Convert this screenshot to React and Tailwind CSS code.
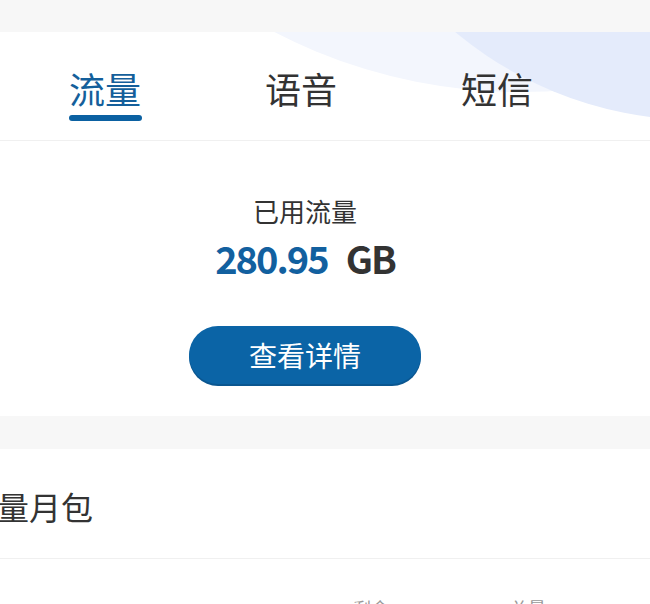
const tabs = ["流量", "语音", "短信"];

function Tabs({ active = 0 }) {
  return (
    <div className="relative h-[109px] overflow-hidden border-b border-[#f0f0f0] bg-white">
      <div className="absolute left-[-13px] top-[-1006px] h-[1066px] w-[1066px] rounded-full bg-[#f3f6fd]" />
      <div className="absolute left-[319px] top-[-670px] h-[758px] w-[758px] rounded-full bg-[#e4ebfb]" />
      <div className="relative ml-[7px] grid w-[588px] grid-cols-3 pt-[38px]">
        {tabs.map((tab, index) => (
          <div key={tab} className="flex flex-col items-center">
            <span
              className={`text-[36px] leading-[36px] ${
                index === active ? "text-[#145f9b]" : "text-[#333333]"
              }`}
            >
              {tab}
            </span>
            <span
              className={`mt-[9px] h-[6px] w-[73px] rounded-full ${
                index === active ? "bg-[#0b61a2]" : "bg-transparent"
              }`}
            />
          </div>
        ))}
      </div>
    </div>
  );
}

function Usage() {
  return (
    <div className="flex w-[610px] flex-col items-center bg-white pb-[32px] pt-[57px]">
      <p className="text-[26px] leading-[26px] text-[#333333]">已用流量</p>
      <p className="mt-[15px] flex items-baseline text-[38px] font-bold leading-[38px] tracking-[-2px]">
        <span className="text-[#12609f]">280.95</span>
        <span className="ml-[18px] text-[#333333]">GB</span>
      </p>
      <button className="mt-[49px] h-[58px] w-[232px] rounded-full bg-[#0b64a6] text-[28px] leading-[28px] text-white shadow-[0_2px_0_#0a5690]">
        查看详情
      </button>
    </div>
  );
}

export default function App() {
  return (
    <div
      className="h-[604px] w-[650px] overflow-hidden bg-[#f7f7f7]"
      style={{ fontFamily: '"Noto Sans CJK SC", "Noto Sans", sans-serif' }}
    >
      <div className="h-[32px]" />
      <Tabs active={0} />
      <div className="bg-white">
        <Usage />
      </div>
      <div className="h-[33px]" />
      <div className="bg-white">
        <div className="border-b border-[#f0f0f0] pb-[36px] pt-[41px]">
          <p className="ml-[-35px] whitespace-nowrap text-[32px] leading-[32px] text-[#333333]">流量月包</p>
        </div>
        <div className="flex pt-[37px] text-[18px] leading-[24px] text-[#999999]">
          <span className="ml-[353px]">剩余</span>
          <span className="ml-[121px]">总量</span>
        </div>
      </div>
    </div>
  );
}
